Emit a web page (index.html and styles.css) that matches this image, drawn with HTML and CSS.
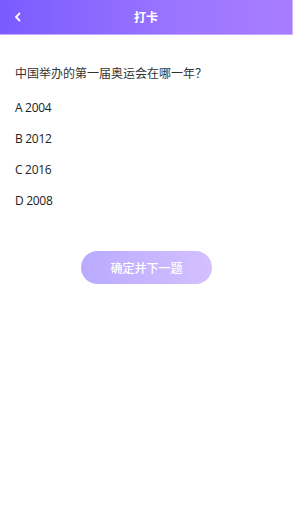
FILE: index.html
```html
<!DOCTYPE html>
<html lang="zh">
<head>
<meta charset="utf-8">
<link rel="stylesheet" href="styles.css">
</head>
<body>
<div class="page">
  <header class="header">
    <span class="back">
      <svg width="8" height="10" viewBox="0 0 8 10"><path d="M5.5 1.5 L2 5 L5.5 8.5" fill="none" stroke="#fff" stroke-width="1.8" stroke-linecap="round" stroke-linejoin="round"/></svg>
    </span>
    <span class="title">打卡</span>
  </header>
  <main class="content">
    <p class="question">中国举办的第一届奥运会在哪一年？</p>
    <ul class="options">
      <li>A 2004</li>
      <li>B 2012</li>
      <li>C 2016</li>
      <li>D 2008</li>
    </ul>
  </main>
  <div class="actions">
    <button class="next">确定并下一题</button>
  </div>
</div>
</body>
</html>
```
FILE: styles.css
```css
html, body {
  margin: 0;
  padding: 0;
  background: #fff;
}
body {
  font-family: "Noto Sans CJK SC", "Noto Sans", sans-serif;
  color: #333;
}
.page {
  width: 293px;
  min-height: 520px;
}
.header {
  position: relative;
  height: 35px;
  display: flex;
  align-items: center;
  justify-content: center;
  background: linear-gradient(90deg, #7a5bff 0%, #9a75ff 60%, #a97dff 100%);
  border-bottom: 1px solid #c2aaff;
  border-right: 1px solid #c9b3ff;
  box-sizing: border-box;
}
.back {
  position: absolute;
  left: 14px;
  top: 12px;
  display: flex;
}
.title {
  color: #fff;
  font-size: 12px;
  font-weight: bold;
  line-height: 1;
}
.content {
  padding: 0 15px;
}
.question {
  margin: 29px 0 0;
  font-size: 12px;
  line-height: 17px;
  color: #333;
}
.options {
  list-style: none;
  margin: 18px 0 0;
  padding: 0;
  display: flex;
  flex-direction: column;
  gap: 14px;
}
.options li {
  font-family: "Open Sans", "Noto Sans", sans-serif;
  font-size: 12px;
  line-height: 17px;
  color: #222;
  letter-spacing: -0.3px;
}
.actions {
  display: flex;
  justify-content: center;
  margin-top: 42px;
}
.next {
  width: 131px;
  height: 33px;
  border: none;
  border-radius: 17px;
  background: linear-gradient(90deg, #b9aaff 0%, #d4c0ff 100%);
  color: #fff;
  font-family: "Noto Sans CJK SC", sans-serif;
  font-size: 12px;
  font-weight: 500;
  padding: 0;
}
```
